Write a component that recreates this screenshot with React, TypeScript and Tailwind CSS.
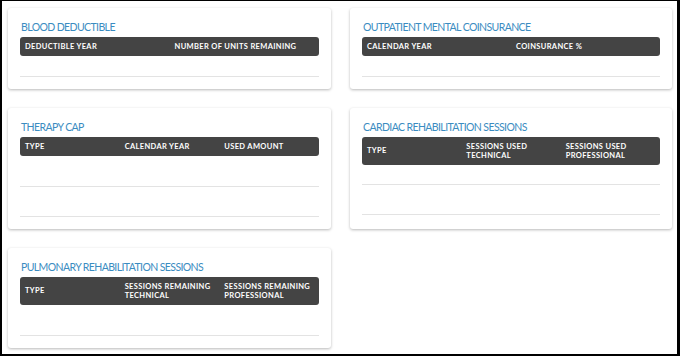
const cards = [
  {
    title: 'BLOOD DEDUCTIBLE',
    columns: ['DEDUCTIBLE YEAR', 'NUMBER OF UNITS REMAINING'],
    rows: ['h-[21px]'],
  },
  {
    title: 'OUTPATIENT MENTAL COINSURANCE',
    columns: ['CALENDAR YEAR', 'COINSURANCE %'],
    rows: ['h-[21px]'],
  },
  {
    title: 'THERAPY CAP',
    columns: ['TYPE', 'CALENDAR YEAR', 'USED AMOUNT'],
    rows: ['h-[31px]', 'h-[30px]'],
  },
  {
    title: 'CARDIAC REHABILITATION SESSIONS',
    columns: ['TYPE', 'SESSIONS USED\nTECHNICAL', 'SESSIONS USED\nPROFESSIONAL'],
    rows: ['h-[20px]', 'h-[30px]'],
    tall: true,
  },
  {
    title: 'PULMONARY REHABILITATION SESSIONS',
    columns: ['TYPE', 'SESSIONS REMAINING\nTECHNICAL', 'SESSIONS REMAINING\nPROFESSIONAL'],
    rows: ['h-[31px]'],
    tall: true,
  },
];

type Card = (typeof cards)[number];

function InfoCard({ card }: { card: Card }) {
  return (
    <div className="bg-white rounded-[3px] shadow-[0_1px_3px_rgba(0,0,0,0.28)] px-3 pt-3 pb-3">
      <h3 className="pl-px text-[10.5px] leading-[14px] tracking-[-0.6px] text-[#3a8cc1] mb-[3px]">{card.title}</h3>
      <div
        className={`grid ${card.columns.length === 3 ? 'grid-cols-3' : 'grid-cols-2'} ${card.tall ? 'h-[28px]' : 'h-[19px]'} items-center bg-[#444444] rounded-[3px] text-white font-bold text-[7.5px] leading-[9.5px] tracking-[0.35px]`}
      >
        {card.columns.map((col) => (
          <div key={col} className="px-[5px] whitespace-pre">
            {col}
          </div>
        ))}
      </div>
      {card.rows.map((h, i) => (
        <div key={i} className={`${h} border-b border-[#e3e3e3]`}></div>
      ))}
    </div>
  );
}

export default function App() {
  return (
    <div className="w-[680px] h-[356px] bg-white border-l-2 border-t border-r-[3px] border-b-2 border-black font-['Lato','Liberation_Sans',sans-serif]">
      <div className="grid grid-cols-[323px_322px] gap-x-[19px] gap-y-[19px] items-stretch pl-[6px] pt-[7px]">
        {cards.map((card) => (
          <InfoCard key={card.title} card={card} />
        ))}
      </div>
    </div>
  );
}
